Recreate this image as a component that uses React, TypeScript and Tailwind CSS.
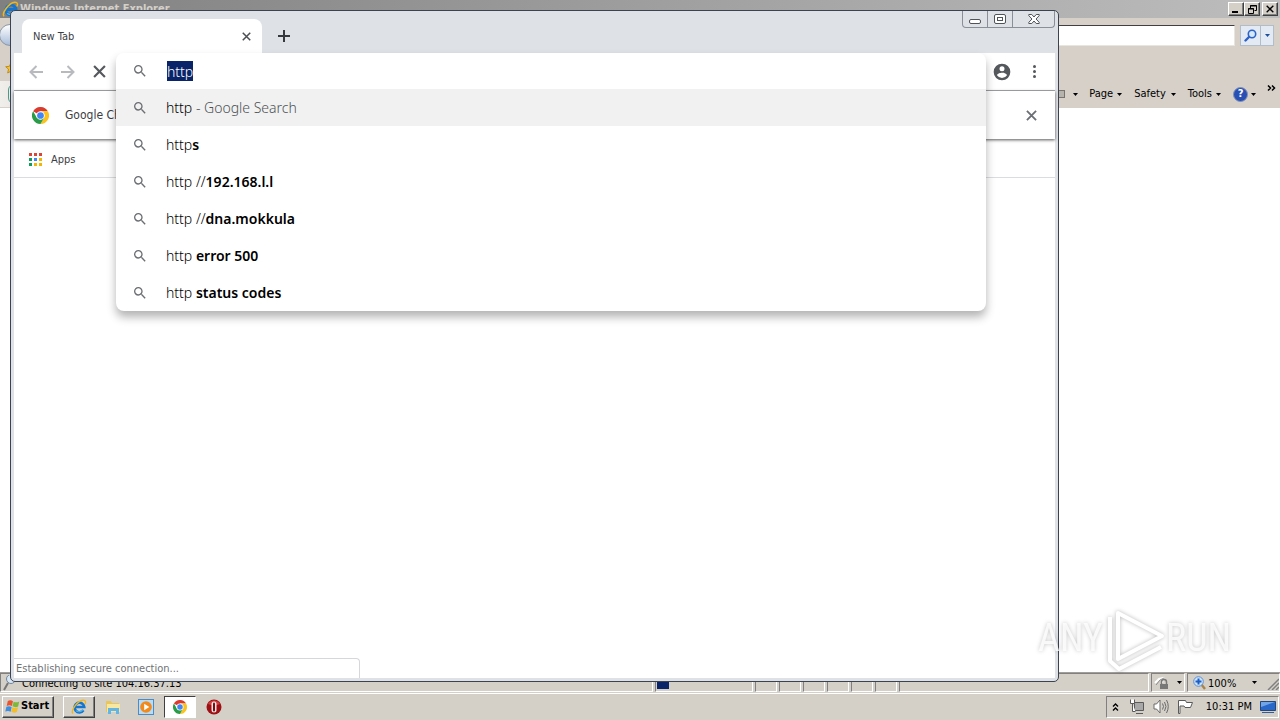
import React, { useEffect, useRef } from "react"

const suggestions = [
	{ typed: "http", rest: "", note: " - Google Search" },
	{ typed: "http", rest: "s" },
	{ typed: "http //", rest: "192.168.l.l" },
	{ typed: "http //", rest: "dna.mokkula" },
	{ typed: "http ", rest: "error 500" },
	{ typed: "http ", rest: "status codes" },
]

const appColors = [
	"bg-[#db4437]", "bg-[#db4437]", "bg-[#db4437]",
	"bg-[#0f9d58]", "bg-[#4285f4]", "bg-[#f4b400]",
	"bg-[#0f9d58]", "bg-[#f4b400]", "bg-[#f4b400]",
]

const raised =
	"border border-t-white border-l-white border-r-[#404040] border-b-[#404040] shadow-[inset_-1px_-1px_0_#808080]"
const sunken = "border border-t-[#808080] border-l-[#808080] border-r-white border-b-white"

const Caret = () => (
	<svg width="5" height="3" viewBox="0 0 5 3" aria-hidden="true">
		<path d="M0 0h5L2.500 3z" fill="currentColor" />
	</svg>
)

const Search = () => (
	<svg className="size-4 shrink-0" viewBox="0 0 24 24" fill="#6b6e72" aria-hidden="true">
		<path d="M15.500 14h-.79l-.28-.27A6.470 6.470 0 0 0 16 9.500 6.500 6.500 0 1 0 9.500 16c1.610 0 3.090-.59 4.230-1.570l.27.28v.79l5 4.990L20.490 19l-4.990-5zm-6 0C7.010 14 5 11.990 5 9.500S7.010 5 9.500 5 14 7.010 14 9.500 11.990 14 9.500 14z" />
	</svg>
)

const Cross = ({ className }: { className: string }) => (
	<svg className={className} viewBox="0 0 12 12" fill="none" stroke="currentColor" strokeWidth="2" aria-hidden="true">
		<path d="M1 1l10 10M11 1L1 11" />
	</svg>
)

const ChromeLogo = ({ className }: { className: string }) => (
	<svg className={className} viewBox="0 0 48 48" aria-hidden="true">
		<path d="M24 24L3.200 12A24 24 0 0 1 44.800 12H24z" fill="#db3a2e" />
		<path d="M24 12h20.800A24 24 0 0 1 24 48l10.400-18z" fill="#fcc31e" />
		<path d="M3.200 12A24 24 0 0 0 24 48l10.400-18H13.600z" fill="#2a9b47" />
		<circle cx="24" cy="24" r="12" fill="#fff" />
		<circle cx="24" cy="24" r="9.500" fill="#4285f4" />
	</svg>
)

const IeLogo = ({ className }: { className: string }) => (
	<svg className={className} viewBox="0 0 20 20" fill="none" aria-hidden="true">
		<path d="M15.500 14a6 6 0 1 1 1-4H6" stroke="#1475d0" strokeWidth="3.400" />
		<path d="M15 13a6 6 0 0 1-9 1.500" stroke="#49b7f0" strokeWidth="1.500" />
		<path d="M2.500 18C-1 15 8 2 15 1.500c4-.2 3.500 3 2.500 5" stroke="#f0b71c" strokeWidth="1.700" />
	</svg>
)

const TitleBar = () => (
	<header className="flex h-[18px] shrink-0 items-center justify-between bg-linear-to-r from-[#808080] to-[#bdbdbd] pr-[2px] pl-[2px]">
		<div className="flex items-center gap-[1px]">
			<IeLogo className="size-[17px]" />
			<h1 className="text-[11px] leading-[18px] font-bold whitespace-nowrap text-[#d4d0c8]">
				Windows Internet Explorer
			</h1>
		</div>
		<div className="flex">
			<button type="button" aria-label="Minimize" className={`flex h-[14px] w-4 items-end justify-center bg-[#d4d0c8] pb-[2px] ${raised}`}>
				<span className="mr-[2px] h-[2px] w-[6px] bg-black" />
			</button>
			<button type="button" aria-label="Restore" className={`flex h-[14px] w-4 items-center justify-center bg-[#d4d0c8] ${raised}`}>
				<svg width="9" height="9" viewBox="0 0 9 9" fill="none" stroke="#000" aria-hidden="true">
					<path d="M2.500 3V.5h6v5H6.500M2 1h7M.5 3.500h5v5h-5zM0 4h6" />
				</svg>
			</button>
			<button type="button" aria-label="Close" className={`ml-[2px] flex h-[14px] w-4 items-center justify-center bg-[#d4d0c8] text-black ${raised}`}>
				<Cross className="size-2" />
			</button>
		</div>
	</header>
)

const ExplorerToolbar = () => (
	<div className="h-[90px] shrink-0 bg-[#d6d0c9] pt-[6px]">
		<div className="flex h-[22px] items-center justify-between gap-[5px] pr-[6px]">
			<div className="-ml-[1px] flex size-[22px] shrink-0 items-center justify-center rounded-full border border-[#8d96a5] bg-linear-to-b from-white to-[#a9bdd9]" />
			<input aria-label="Address" className="h-[21px] min-w-0 flex-1 border border-t-[#404040] border-l-[#404040] border-r-[#e8e4de] border-b-[#e8e4de] bg-white" />
			<div className="flex h-[21px] border border-[#b3bdca] bg-[#e4eaf3]">
				<button type="button" aria-label="Search" className="flex w-5 items-center justify-center border-r border-[#b3bdca]">
					<svg width="13" height="13" viewBox="0 0 13 13" fill="none" stroke="#2a62c9" aria-hidden="true">
						<circle cx="8" cy="5" r="3.700" strokeWidth="1.600" fill="#d8e8fb" />
						<path d="M5 8L1.500 11.500" strokeWidth="2.400" strokeLinecap="round" />
					</svg>
				</button>
				<button type="button" aria-label="Search options" className="flex w-3 items-center justify-center text-[#1e4f9c]">
					<Caret />
				</button>
			</div>
		</div>
		<div className="flex h-7 items-end pl-[5px]">
			<svg className="size-3" viewBox="0 0 12 12" fill="#f3c33c" stroke="#c28e12" aria-hidden="true">
				<path d="M6 .8l1.600 3.500 3.700.4-2.800 2.500.8 3.800L6 9.100 2.700 11l.8-3.800L.7 4.700l3.700-.4z" />
			</svg>
		</div>
		<div className="mt-[7px] flex h-[26px] items-center justify-between bg-linear-to-r from-[#f1efec] to-[#d6d0c9] to-5% pl-2">
			<span className="h-5 w-3 rounded-full border border-[#4b9b8a]" />
			<div className="flex h-full items-center text-[11px] text-black">
				<button type="button" aria-label="Print" className="mr-[11px] flex items-center gap-2">
					<span className="h-2 w-2 border border-[#77736e] bg-[#b6b2ac]" />
					<Caret />
				</button>
				<button type="button" className="mr-3 flex items-center gap-1">Page <Caret /></button>
				<button type="button" className="mr-3 flex items-center gap-[5px]">Safety <Caret /></button>
				<button type="button" className="mr-3 flex items-center gap-1">Tools <Caret /></button>
				<button type="button" aria-label="Help" className="flex items-center gap-[3px]">
					<span className="flex size-[15px] items-center justify-center rounded-full border border-[#8092b8] bg-[#2850b4] text-[11px] font-bold text-white">
						?
					</span>
					<Caret />
				</button>
				<button type="button" aria-label="More" className="mr-1 ml-[11px] pb-3">
					<svg width="9" height="6" viewBox="0 0 9 6" fill="none" stroke="#000" strokeWidth="1.500" aria-hidden="true">
						<path d="M1 .5L3.500 3 1 5.500M5 .5L7.500 3 5 5.500" />
					</svg>
				</button>
			</div>
		</div>
	</div>
)

const StatusBar = () => (
	<footer className="flex h-5 shrink-0 gap-[2px] border-t border-[#a19d98] bg-[#d4d0c8] text-[11px] leading-5">
		<div className={`flex min-w-0 flex-1 items-center ${sunken}`}>
			<svg className="size-4 shrink-0" viewBox="0 0 16 16" fill="none" aria-hidden="true">
				<path d="M7 8l-4 7" stroke="#767676" strokeWidth="2" />
				<circle cx="10" cy="4" r="4.500" fill="#d7e6f3" stroke="#71859b" />
			</svg>
			<span className="ml-[5px] pt-[2px] whitespace-nowrap">Connecting to site 104.16.37.13</span>
		</div>
		<div className={`w-[98px] pl-[1px] ${sunken}`}>
			<div className="h-[15px] w-3 bg-[#0a246a]" />
		</div>
		{[0, 1, 2, 3, 4, 5].map((pane) => (
			<div key={pane} className={`w-[22px] ${sunken}`} />
		))}
		<div className={`w-[250px] ${sunken}`} />
		<button type="button" aria-label="Protected mode" className={`flex w-[34px] items-center justify-center gap-2 ${sunken}`}>
			<svg width="15" height="14" viewBox="0 0 15 14" fill="none" aria-hidden="true">
				<path d="M1 7l4-4 4-1-1 5" stroke="#fff" strokeWidth="2" />
				<path d="M2 9l4-5 4-2" stroke="#8d8d8d" />
				<path d="M7.500 8V6a2.500 2.500 0 0 1 5 0v2" stroke="#777" strokeWidth="1.500" />
				<path d="M6 8h8v5H6z" fill="#777" />
			</svg>
			<Caret />
		</button>
		<button type="button" className={`flex w-[93px] items-center pl-[5px] ${sunken}`}>
			<svg width="13" height="14" viewBox="0 0 13 14" fill="none" aria-hidden="true">
				<path d="M8 8l4 5" stroke="#a9844a" strokeWidth="2.400" />
				<circle cx="5.500" cy="5.500" r="4.800" fill="#cfe4fb" stroke="#5d8fd1" />
				<path d="M5.500 2.500v6M2.500 5.500h6" stroke="#1b5fc4" strokeWidth="2" />
			</svg>
			<span className="ml-[2px] pt-[2px]">100%</span>
			<span className="ml-4"><Caret /></span>
			<svg className="mt-[3px] ml-auto size-3" viewBox="0 0 12 12" stroke="#808080" strokeWidth="1.500" aria-hidden="true">
				<path d="M1 12L12 1M5 12l7-7M9 12l3-3" />
			</svg>
		</button>
	</footer>
)

const Taskbar = () => (
	<nav className="flex h-7 shrink-0 items-center justify-between border-t border-[#d4d0c8] bg-[#d4d0c8] pl-[2px] shadow-[inset_0_1px_0_#fff]">
		<div className="flex items-center">
			<button type="button" className={`flex h-[22px] w-[52px] items-center gap-[1px] pl-[2px] text-[11px] font-bold ${raised}`}>
				<svg className="size-[15px]" viewBox="0 0 16 16" aria-hidden="true">
					<path d="M3 2c2-1 4-.8 5.500.3L7.300 7.500C5.500 6.500 4 6.600 1.800 7.400z" fill="#e8542f" />
					<path d="M9.200 2.800c2 1 3.800 1 6-.2L14 8c-2 1-4 .9-6-.2z" fill="#7db83a" />
					<path d="M1.500 8.200c2-.8 3.800-.8 5.600.2L6 13.500c-2-1-3.600-1-5.700-.1z" fill="#3f8ede" />
					<path d="M7.800 8.800c2 1 3.700 1 6 .1l-1.200 5c-2 1-4 .9-6-.2z" fill="#f4bd2b" />
				</svg>
				Start
			</button>
			<button type="button" aria-label="Internet Explorer" className={`ml-[9px] flex h-[22px] w-8 items-center justify-center ${raised}`}>
				<IeLogo className="size-4" />
			</button>
			<button type="button" aria-label="Windows Explorer" className="ml-[9px] flex w-[18px] justify-center">
				<svg width="16" height="16" viewBox="0 0 16 16" aria-hidden="true">
					<path d="M1 2h5l1 2h7v9H1z" fill="#e9c65b" />
					<path d="M2 5h13v8H2z" fill="#f8e7a0" />
					<path d="M3 15V9h11v6h-3v-3H6v3z" fill="#62b5e5" />
				</svg>
			</button>
			<button type="button" aria-label="Media Player" className="ml-4 flex size-[16px] items-center justify-center border border-[#4b8bc8] bg-[#b9dcf5]">
				<svg width="12" height="12" viewBox="0 0 12 12" aria-hidden="true">
					<circle cx="6" cy="6" r="5.800" fill="#f18a1b" />
					<path d="M4.200 2.800L9.300 6l-5.100 3.200z" fill="#fff" />
				</svg>
			</button>
			<button type="button" aria-label="Chrome" className="ml-[10px] flex h-[22px] w-8 items-center justify-center border border-t-[#404040] border-l-[#404040] border-r-white border-b-white bg-white">
				<ChromeLogo className="size-[14px]" />
			</button>
			<button type="button" aria-label="Opera" className="ml-[10px]">
				<svg width="16" height="16" viewBox="0 0 16 16" aria-hidden="true">
					<circle cx="8" cy="8" r="7.500" fill="#9e1014" />
					<path d="M2 5a7 7 0 0 1 12 0L8 7z" fill="#cf4040" />
					<rect x="5.500" y="2.500" width="5" height="11" rx="2.500" fill="#f3e9e9" />
					<rect x="7" y="3.500" width="2" height="9" rx="1" fill="#80090d" />
				</svg>
			</button>
		</div>
		<div className={`mr-[1px] flex h-[22px] items-center text-[11px] ${sunken}`}>
			<svg className="ml-[5px]" width="7" height="8" viewBox="0 0 7 8" fill="none" stroke="#000" strokeWidth="1.400" aria-hidden="true">
				<path d="M1 3.500l2.500-2.500L6 3.500M1 7.500L3.500 5 6 7.500" />
			</svg>
			<svg className="ml-[10px]" width="16" height="15" viewBox="0 0 16 15" fill="none" stroke="#5a5a5a" aria-hidden="true">
				<path d="M5.500 3.500h9v8h-9z" fill="#a8a8a8" />
				<path d="M7 14.500h7M1.500.5v4h4v-4M3.500 4.500v8h3" fill="#fff" />
			</svg>
			<svg className="ml-2" width="16" height="15" viewBox="0 0 16 15" fill="none" stroke="#6a6a6a" aria-hidden="true">
				<path d="M1 5h2.500L7 1v13l-3.500-4H1z" fill="#fff" />
				<path d="M9.500 4.500q2 3 0 6M11.500 3q3 4.500 0 9M13.500 1q3.500 6.500 0 13" />
			</svg>
			<svg className="ml-2" width="17" height="15" viewBox="0 0 17 15" fill="#fff" stroke="#5a5a5a" aria-hidden="true">
				<path d="M1.500 14.500v-13h7l1 2h6l-2 5H8l-1-1.500H3v7.500z" />
			</svg>
			<time className="ml-3 pt-[2px]">10:31 PM</time>
			<svg className="mr-[2px] ml-2" width="16" height="14" viewBox="0 0 16 14" aria-hidden="true">
				<path d="M.5 1.500h15v9H.5z" fill="#2968c8" stroke="#24477e" />
				<path d="M1 2h14L1 7z" fill="#70a5e8" />
				<path d="M2 12.500h12" stroke="#355d94" />
			</svg>
		</div>
	</nav>
)

const Omnibox = () => {
	const input = useRef<HTMLInputElement>(null)

	useEffect(() => {
		input.current?.focus()
		input.current?.select()
	}, [])

	return (
		<div className="absolute top-[42px] right-[72px] left-[105px] z-10 overflow-hidden rounded-lg bg-white font-['Noto_Sans','Open_Sans',sans-serif] text-[14px] font-light text-black shadow-[0_6px_10px_rgba(0,0,0,0.3)]">
			<div className="flex h-9 items-center gap-[19px] pl-4">
				<Search />
				<input
					ref={input}
					aria-label="Address and search"
					defaultValue="http"
					className="h-5 min-w-0 flex-1 font-light outline-none selection:bg-[#0a246a] selection:text-white"
				/>
			</div>
			<ul>
				{suggestions.map(({ typed, rest, note }) => (
					<li key={typed + rest}>
						<a href="#" className={`flex h-[37px] items-center gap-[18px] pl-4 ${note ? "bg-[#f1f1f1]" : ""}`}>
							<Search />
							<span className="whitespace-pre">
								{typed}
								<b className="font-semibold">{rest}</b>
								<span className="text-[#4d5156]">{note}</span>
							</span>
						</a>
					</li>
				))}
			</ul>
		</div>
	)
}

const ChromeWindow = () => (
	<section className="absolute top-[10px] right-[221px] bottom-[38px] left-[10px] flex flex-col rounded-[5px] border border-[#3c4350] bg-[#dee1e6] px-[3px] pb-[3px] text-[11px] text-[#3c4043]">
		<div className="flex h-[42px] shrink-0 items-end">
			<div className="ml-2 flex h-[34px] w-60 items-center justify-between rounded-t-lg bg-white px-[11px]">
				<span className="pt-[2px]">New Tab</span>
				<button type="button" aria-label="Close tab" className="text-[#4b4e52]">
					<Cross className="size-[9px]" />
				</button>
			</div>
			<button type="button" aria-label="New tab" className="mb-[11px] ml-4 text-[#35383c]">
				<svg width="12" height="12" viewBox="0 0 12 12" stroke="currentColor" strokeWidth="2" aria-hidden="true">
					<path d="M6 0v12M0 6h12" />
				</svg>
			</button>
			<div className="ml-auto flex h-[17px] self-start rounded-b-[4px] border border-t-0 border-[#8a8e96]">
				<button type="button" aria-label="Minimize" className="flex w-[25px] items-center justify-center border-r border-[#8a8e96]">
					<span className="mt-1 h-[5px] w-3 rounded-[2px] border border-[#4f535a] bg-white" />
				</button>
				<button type="button" aria-label="Maximize" className="flex w-[25px] items-center justify-center border-r border-[#8a8e96]">
					<span className="flex h-[10px] w-3 items-center justify-center rounded-[2px] border border-[#4f535a] bg-white">
						<span className="h-1 w-[6px] border border-[#4f535a]" />
					</span>
				</button>
				<button type="button" aria-label="Close" className="flex w-[41px] items-center justify-center">
					<svg width="12" height="10" viewBox="0 0 12 10" fill="#fff" stroke="#4f535a" aria-hidden="true">
						<path d="M.8.500h3L6 3 8.200.500h3v1.200L8 5l3.200 3.300v1.200h-3L6 7 3.800 9.500h-3V8.300L4 5 .8 1.700z" />
					</svg>
				</button>
			</div>
		</div>
		<div className="flex h-[38px] shrink-0 items-center justify-between border-b border-[#a7a9ac] bg-white px-[15px]">
			<div className="flex items-center gap-[18px]">
				<button type="button" aria-label="Back" className="text-[#b8babd]">
					<svg width="14" height="14" viewBox="0 0 14 14" fill="none" stroke="currentColor" strokeWidth="2" aria-hidden="true">
						<path d="M14 7H2M7.500 1L1.500 7l6 6" />
					</svg>
				</button>
				<button type="button" aria-label="Forward" className="text-[#b8babd]">
					<svg width="14" height="14" viewBox="0 0 14 14" fill="none" stroke="currentColor" strokeWidth="2" aria-hidden="true">
						<path d="M0 7h12M6.500 1l6 6-6 6" />
					</svg>
				</button>
				<button type="button" aria-label="Stop" className="text-[#55585c]">
					<Cross className="size-[13px]" />
				</button>
			</div>
			<div className="flex items-center gap-4">
				<button type="button" aria-label="Profile">
					<svg className="size-5" viewBox="0 0 24 24" fill="#54575b" aria-hidden="true">
						<path d="M12 2a10 10 0 1 0 0 20 10 10 0 0 0 0-20zm0 3a3 3 0 1 1 0 6 3 3 0 0 1 0-6zm0 14.200a7.200 7.200 0 0 1-6-3.220c.03-1.990 4-3.080 6-3.080 1.990 0 5.970 1.090 6 3.080a7.200 7.200 0 0 1-6 3.220z" />
					</svg>
				</button>
				<button type="button" aria-label="Menu" className="flex w-3 flex-col items-center gap-[2px]">
					{[0, 1, 2].map((dot) => (
						<span key={dot} className="size-[3px] rounded-full bg-[#54575b]" />
					))}
				</button>
			</div>
		</div>
		<div className="z-[1] flex h-12 shrink-0 items-center justify-between bg-white px-[18px] shadow-[0_1px_3px_#555]">
			<div className="flex items-center gap-4">
				<ChromeLogo className="size-[17px]" />
				<span className="text-[12px]">Google Chrome</span>
			</div>
			<button type="button" aria-label="Dismiss" className="text-[#6b6e72]">
				<Cross className="size-[11px]" />
			</button>
		</div>
		<div className="flex h-[39px] shrink-0 items-center border-b border-[#dadce0] bg-white pt-[3px] pl-[15px]">
			<a href="#" className="flex items-center gap-[9px]">
				<span className="grid grid-cols-3 gap-[2px]">
					{appColors.map((color, i) => (
						<span key={i} className={`size-[3px] ${color}`} />
					))}
				</span>
				<span className="pt-[2px]">Apps</span>
			</a>
		</div>
		<div className="flex min-h-0 flex-1 items-end bg-white">
			<p className="h-5 w-[346px] rounded-tr-[4px] border-t border-r border-[#d5d7da] pl-[2px] leading-5 text-[#707276]">
				Establishing secure connection...
			</p>
		</div>
		<Omnibox />
	</section>
)

const Watermark = () => (
	<svg className="pointer-events-none absolute right-[42px] bottom-[44px] z-20 h-[72px] w-[204px] drop-shadow-[0_0_2px_rgba(0,0,0,0.28)]" viewBox="0 0 204 72" aria-hidden="true">
		<g fill="#fff" fillOpacity="0.800" fontFamily="'Liberation Sans Narrow', 'Roboto Condensed', 'Open Sans Condensed', Lato, sans-serif" fontSize="38">
			<text x="4" y="47">ANY</text>
			<text x="132" y="47">RUN</text>
		</g>
		<g fill="none" stroke="#fff" strokeWidth="4" strokeLinejoin="round">
			<path d="M84 9l44 23-44 23z" />
			<path d="M76 13v44l9 8 42-22" />
		</g>
	</svg>
)

const App = () => (
	<main className="relative flex h-screen flex-col overflow-hidden bg-white font-['DejaVu_Sans_Condensed','DejaVu_Sans',sans-serif] text-black">
		<TitleBar />
		<ExplorerToolbar />
		<div className="flex-1" />
		<StatusBar />
		<Taskbar />
		<ChromeWindow />
		<Watermark />
	</main>
)

export default App
